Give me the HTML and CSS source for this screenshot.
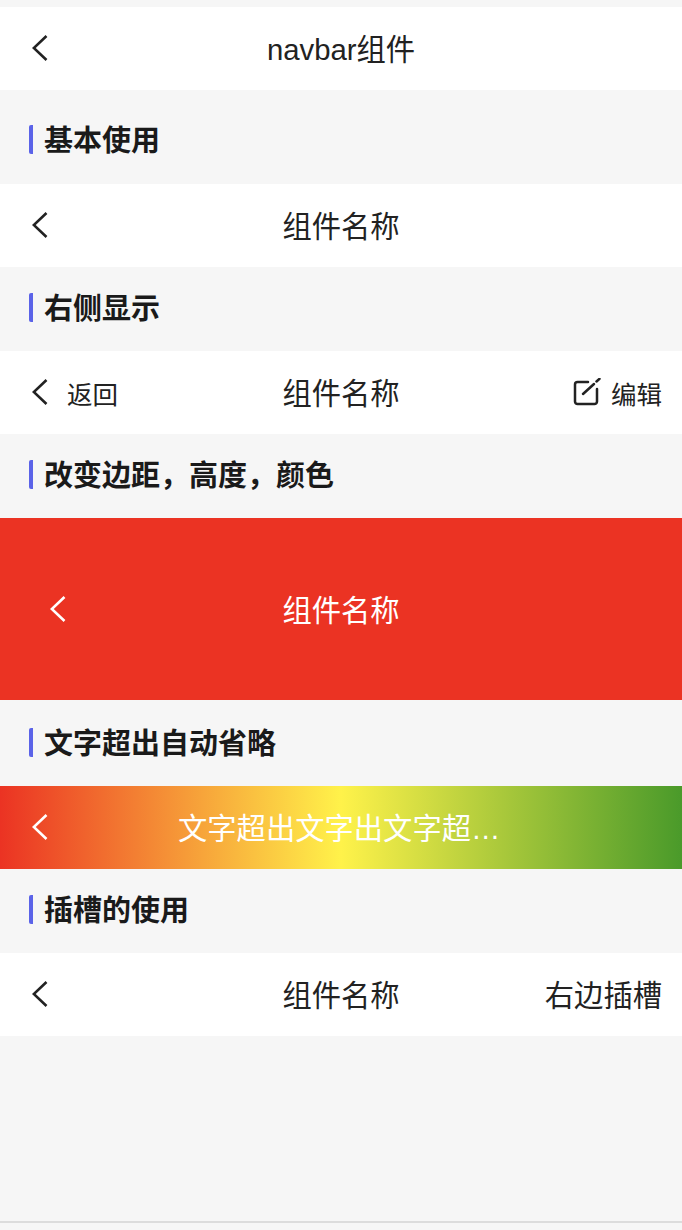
FILE: index.html
```html
<!DOCTYPE html>
<html lang="zh-CN">
<head>
    <meta charset="UTF-8">
    <meta name="viewport" content="width=device-width, initial-scale=1.0">
    <title>navbar组件</title>
    <link rel="stylesheet" href="styles.css">
</head>
<body>
    <div class="page">
        <div class="navbar">
            <div class="nav-left">
                <svg class="back" viewBox="0 0 16 26"><path d="M14.500 1 L1.800 13 L14.500 25"/></svg>
            </div>
            <div class="nav-title">navbar组件</div>
            <div class="nav-right"></div>
        </div>

        <h2 class="sec-title sec-first"><span>基本使用</span></h2>
        <div class="navbar">
            <div class="nav-left">
                <svg class="back" viewBox="0 0 16 26"><path d="M14.500 1 L1.800 13 L14.500 25"/></svg>
            </div>
            <div class="nav-title">组件名称</div>
            <div class="nav-right"></div>
        </div>

        <h2 class="sec-title"><span>右侧显示</span></h2>
        <div class="navbar">
            <div class="nav-left">
                <svg class="back" viewBox="0 0 16 26"><path d="M14.500 1 L1.800 13 L14.500 25"/></svg>
                <span class="nav-text">返回</span>
            </div>
            <div class="nav-title">组件名称</div>
            <div class="nav-right">
                <svg class="edit" viewBox="0 0 28 28"><path d="M15 4 H4.500 A2.500 2.500 0 0 0 2 6.500 V23.500 A2.500 2.500 0 0 0 4.500 26 H21.500 A2.500 2.500 0 0 0 24 23.500 V11"/><path d="M10 16 L21 6"/><path d="M23.500 3.500 L26.500 0.800"/></svg>
                <span class="nav-text">编辑</span>
            </div>
        </div>

        <h2 class="sec-title"><span>改变边距，高度，颜色</span></h2>
        <div class="navbar navbar-red">
            <div class="nav-left">
                <svg class="back" viewBox="0 0 16 26"><path d="M14.500 1 L1.800 13 L14.500 25"/></svg>
            </div>
            <div class="nav-title">组件名称</div>
            <div class="nav-right"></div>
        </div>

        <h2 class="sec-title sec-tall"><span>文字超出自动省略</span></h2>
        <div class="navbar navbar-gradient">
            <div class="nav-left">
                <svg class="back" viewBox="0 0 16 26"><path d="M14.500 1 L1.800 13 L14.500 25"/></svg>
            </div>
            <div class="nav-title">文字超出文字出文字超…</div>
            <div class="nav-right"></div>
        </div>

        <h2 class="sec-title"><span>插槽的使用</span></h2>
        <div class="navbar">
            <div class="nav-left">
                <svg class="back" viewBox="0 0 16 26"><path d="M14.500 1 L1.800 13 L14.500 25"/></svg>
            </div>
            <div class="nav-title">组件名称</div>
            <div class="nav-right nav-slot">右边插槽</div>
        </div>
    </div>
    <div class="page-end"></div>
</body>
</html>
```

FILE: styles.css
```css
body {
    margin: 0;
    background-color: #f6f6f6;
    color: #222;
    font-family: "Liberation Sans", "Noto Sans CJK SC", sans-serif;
}
.page {
    padding-top: 7px;
    height: 1221px;
    box-sizing: border-box;
}
.page-end {
    border-top: 2px solid #dcdcdc;
    height: 7px;
}
.navbar {
    display: grid;
    grid-template-columns: minmax(0, 1fr) auto minmax(0, 1fr);
    align-items: center;
    height: 82.500px;
    padding: 0 20px;
    background-color: #fff;
}
.nav-left, .nav-right {
    display: flex;
    align-items: center;
}
.nav-left {
    padding-left: 12px;
}
.nav-right {
    justify-content: flex-end;
}
.nav-title {
    padding-top: 4px;
    font-size: 29.300px;
    line-height: 40px;
    white-space: nowrap;
}
.nav-text {
    padding-top: 6px;
    font-size: 25.500px;
    line-height: 36px;
    margin-left: 19px;
}
.nav-right .nav-text {
    margin-left: 10px;
}
.nav-slot {
    padding-top: 4px;
    font-size: 29.300px;
    line-height: 40px;
}
.back {
    display: block;
    width: 16px;
    height: 26px;
    fill: none;
    stroke: currentColor;
    stroke-width: 2.600;
}
.edit {
    display: block;
    width: 28px;
    height: 28px;
    fill: none;
    stroke: currentColor;
    stroke-width: 2.500;
    stroke-linecap: round;
}
.navbar-red {
    height: 182px;
    background-color: #eb3323;
    color: #fff;
}
.navbar-red .nav-left {
    padding-left: 30px;
}
.navbar-gradient {
    background: linear-gradient(to right, #eb3323, #fff24a 50%, #4a9a2a);
    color: #fff;
}
.navbar-gradient .nav-title {
    width: 326px;
}
.sec-title {
    display: flex;
    align-items: center;
    box-sizing: border-box;
    height: 84.500px;
    margin: 0;
    padding: 0 0 2px 29px;
    font-size: 29px;
    font-weight: 700;
    color: #1a1a1a;
}
.sec-first {
    height: 94.500px;
    padding: 6px 0 0 29px;
}
.sec-tall {
    height: 86px;
}
.sec-title span {
    display: block;
    padding: 3px 0 0 11px;
    line-height: 26px;
    border-left: 4px solid #5b63e8;
    border-radius: 2px;
}
```
